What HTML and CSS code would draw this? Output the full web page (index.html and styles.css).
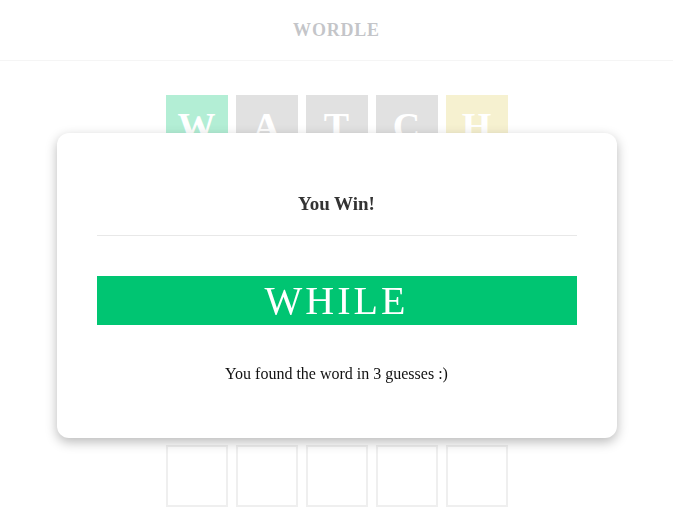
FILE: index.html
```html
<!DOCTYPE html>
<html lang="en">
<head>
<meta charset="utf-8">
<title>Wordle</title>
<link rel="stylesheet" href="styles.css">
</head>
<body>
<header class="header">
  <h1 class="logo">WORDLE</h1>
</header>
<main class="board">
  <div class="row">
    <div class="tile correct">W</div>
    <div class="tile absent">A</div>
    <div class="tile absent">T</div>
    <div class="tile absent">C</div>
    <div class="tile present">H</div>
  </div>
  <div class="row">
    <div class="tile present">H</div>
    <div class="tile absent">O</div>
    <div class="tile correct">I</div>
    <div class="tile absent">S</div>
    <div class="tile correct">E</div>
  </div>
  <div class="row">
    <div class="tile correct">W</div>
    <div class="tile correct">H</div>
    <div class="tile correct">I</div>
    <div class="tile correct">L</div>
    <div class="tile correct">E</div>
  </div>
  <div class="row">
    <div class="tile"></div><div class="tile"></div><div class="tile"></div><div class="tile"></div><div class="tile"></div>
  </div>
  <div class="row">
    <div class="tile"></div><div class="tile"></div><div class="tile"></div><div class="tile"></div><div class="tile"></div>
  </div>
  <div class="row">
    <div class="tile"></div><div class="tile"></div><div class="tile"></div><div class="tile"></div><div class="tile"></div>
  </div>
</main>
<div class="overlay">
  <div class="modal">
    <h2 class="modal-title">You Win!</h2>
    <div class="word">WHILE</div>
    <p class="message">You found the word in 3 guesses :)</p>
  </div>
</div>
</body>
</html>
```
FILE: styles.css
```css
* { box-sizing: border-box; }
html, body { margin: 0; padding: 0; }
body {
  font-family: "Liberation Serif", "Times New Roman", serif;
  background: #fff;
  color: #111;
  height: 520px;
  overflow: hidden;
}
.header {
  height: 61px;
  border-bottom: 1px solid #dcdcdc;
  display: flex;
  align-items: center;
  justify-content: center;
}
.logo {
  margin: 0;
  font-size: 18px;
  font-weight: bold;
  letter-spacing: 0.8px;
  color: #3a3f4a;
  padding-top: 1px;
}
.board {
  display: flex;
  flex-direction: column;
  align-items: center;
  gap: 8px;
  padding-top: 34px;
}
.row {
  display: flex;
  gap: 8px;
}
.tile {
  width: 62px;
  height: 62px;
  border: 2px solid #c8c8c8;
  display: flex;
  align-items: center;
  justify-content: center;
  font-size: 38px;
  font-weight: bold;
  color: #fff;
}
.tile.correct { background: #00c774; border-color: #00c774; }
.tile.absent { background: #9a9a9a; border-color: #9a9a9a; }
.tile.present { background: #e2d063; border-color: #e2d063; }
.overlay {
  position: fixed;
  inset: 0;
  background: rgba(255, 255, 255, 0.7);
  display: flex;
  justify-content: center;
  align-items: flex-start;
  padding-top: 133px;
}
.modal {
  width: 560px;
  background: #fff;
  border-radius: 12px;
  box-shadow: 0 4px 12px rgba(0, 0, 0, 0.28);
  padding: 59px 40px 55px;
  text-align: center;
}
.modal-title {
  margin: 0;
  font-size: 19px;
  line-height: 24px;
  font-weight: bold;
  color: #333;
  padding-bottom: 19px;
  border-bottom: 1px solid #e8e8e8;
}
.word {
  margin-top: 40px;
  height: 49px;
  line-height: 49px;
  background: #00c572;
  color: #fff;
  font-size: 40px;
  letter-spacing: 3px;
}
.message {
  margin: 40px 0 0;
  font-size: 16px;
  line-height: 18px;
  color: #111;
}
```
